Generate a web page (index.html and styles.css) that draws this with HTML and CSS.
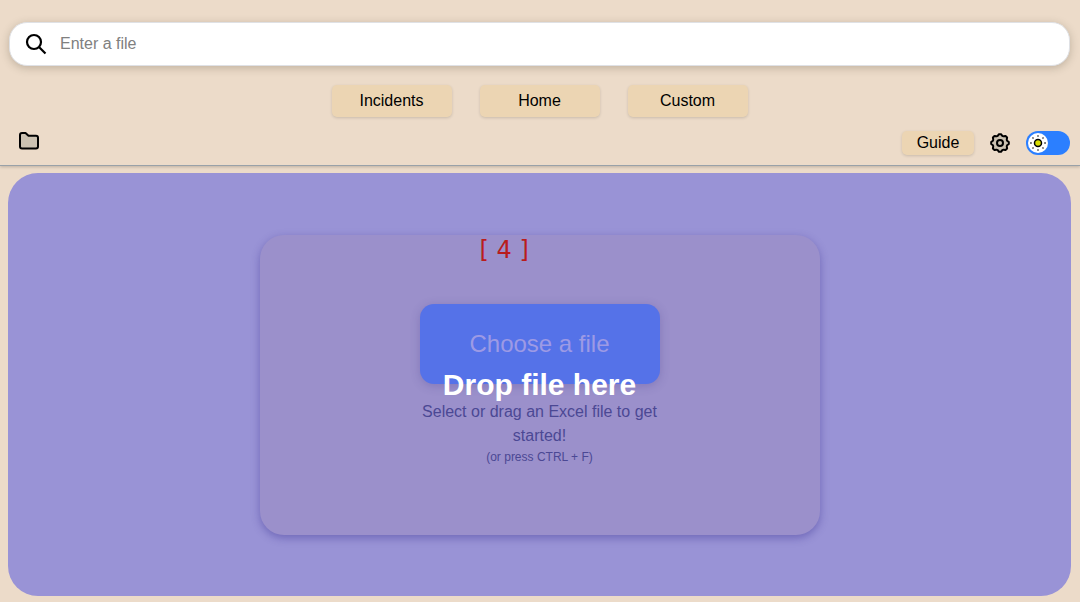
FILE: index.html
```html
<!DOCTYPE html>
<html lang="en">
<head>
<meta charset="utf-8">
<meta name="viewport" content="width=device-width, initial-scale=1">
<title>File viewer</title>
<link rel="stylesheet" href="styles.css">
</head>
<body>
<header class="header">
  <label class="search">
    <svg class="search-icon" viewBox="0 0 24 24" width="24" height="24" fill="none" stroke="#000" stroke-width="2.200" aria-hidden="true"><circle cx="10" cy="10" r="7"/><path d="M15 15 21.500 21.500"/></svg>
    <input class="search-input" type="text" placeholder="Enter a file" aria-label="Enter a file">
  </label>
  <nav class="tabs">
    <button class="btn tab" type="button">Incidents</button>
    <button class="btn tab" type="button">Home</button>
    <button class="btn tab" type="button">Custom</button>
  </nav>
  <div class="toolbar">
    <button class="icon-btn" type="button" aria-label="Open folder">
      <svg viewBox="0 0 22 20" width="22" height="20" fill="#cbc1b1" stroke="#000" stroke-width="2" stroke-linejoin="round" aria-hidden="true"><path d="M2 4Q2 2 4 2H7.500L10.500 4.800H18Q20 4.800 20 6.800V15.500Q20 17.500 18 17.500H4Q2 17.500 2 15.500Z"/></svg>
    </button>
    <div class="tools">
      <button class="btn guide" type="button">Guide</button>
      <button class="icon-btn" type="button" aria-label="Settings">
        <svg viewBox="0 0 20 20" width="20" height="20" stroke="#000" stroke-width="2" stroke-linejoin="round" aria-hidden="true"><path fill="#cbc1b1" d="M9 1.200H11L12.300 2.900Q12.900 3.300 13.600 3.200L15.500 2.900L17.100 4.500L16.800 6.400Q16.700 7.100 17.100 7.700L18.800 9V11L17.100 12.300Q16.700 12.900 16.800 13.600L17.100 15.500L15.500 17.100L13.600 16.800Q12.900 16.700 12.300 17.100L11 18.800H9L7.700 17.100Q7.100 16.700 6.400 16.800L4.500 17.100L2.900 15.500L3.200 13.600Q3.300 12.900 2.900 12.300L1.200 11V9L2.900 7.700Q3.300 7.100 3.200 6.400L2.900 4.500L4.500 2.900L6.400 3.200Q7.100 3.300 7.700 2.900Z"/><circle cx="10" cy="10" r="3" fill="#cbc1b1"/></svg>
      </button>
      <label class="switch">
        <input class="switch-input" type="checkbox" aria-label="Light theme" checked>
        <svg class="knob" viewBox="0 0 20 20" width="20" height="20" aria-hidden="true"><circle cx="10" cy="10" r="10" fill="#fff"/><circle cx="10" cy="10" r="3.500" fill="#d9dd00" stroke="#000" stroke-width="1.500"/><path d="M10 2.200v1.500M10 16.300v1.500M2.200 10h1.500M16.300 10h1.500M4.500 4.500l1 1M14.500 14.500l1 1M4.500 15.500l1-1M14.500 5.500l1-1" stroke="#222" stroke-width="1.300"/></svg>
      </label>
    </div>
  </div>
</header>
<main class="dropzone">
  <section class="card">
    <p class="count">[ 4 ]</p>
    <div class="picker">
      <button class="choose" type="button">Choose a file</button>
      <p class="hint">Select or drag an Excel file to get started!</p>
      <p class="shortcut">(or press CTRL + F)</p>
    </div>
  </section>
  <div class="drop-label">Drop file here</div>
</main>
</body>
</html>
```
FILE: styles.css
```css
* { box-sizing: border-box; }

body {
  margin: 0;
  min-height: 100vh;
  display: flex;
  flex-direction: column;
  background: #ecdbc9;
  color: #000;
  font-family: "Liberation Sans", Arial, sans-serif;
  font-size: 16px;
  line-height: 24px;
}

p { margin: 0; }

button, input { font: inherit; }

.header {
  padding: 22px 10px 10px 9px;
  border-bottom: 1px solid #99a1a8;
  box-shadow: 0 1px 3px rgba(0, 0, 0, 0.2);
}

.search {
  display: flex;
  align-items: center;
  gap: 12px;
  height: 44px;
  padding: 0 14px;
  background: #fff;
  border: 1px solid #dfe1e5;
  border-radius: 18px;
  box-shadow: 0 2px 8px rgba(60, 50, 30, 0.25);
}

.search-icon { flex: none; }

.search-input {
  flex: 1;
  min-width: 0;
  padding: 0;
  border: 0;
  outline: 0;
  background: none;
}

.search-input::placeholder { color: #808080; }

.btn {
  padding: 0;
  border: 0;
  border-radius: 5px;
  background: #ecd5b3;
  color: #000;
  box-shadow: 0 1px 3px rgba(0, 0, 0, 0.15);
}

.tabs {
  display: flex;
  justify-content: center;
  gap: 28px;
  margin-top: 19px;
}

.tab {
  width: 120px;
  height: 32px;
}

.toolbar {
  display: flex;
  justify-content: space-between;
  align-items: flex-start;
  margin-top: 14px;
  padding-left: 9px;
}

.tools {
  display: flex;
  align-items: center;
  gap: 16px;
}

.guide {
  width: 72px;
  height: 24px;
}

.icon-btn {
  display: flex;
  padding: 0;
  border: 0;
  background: none;
}

.switch {
  position: relative;
  display: flex;
  align-items: center;
  width: 44px;
  height: 24px;
  padding: 2px;
  border-radius: 12px;
  background: #2b7fff;
}

.switch-input {
  position: absolute;
  inset: 0;
  width: 100%;
  height: 100%;
  margin: 0;
  opacity: 0;
}

.dropzone {
  position: relative;
  flex: 1;
  display: flex;
  justify-content: center;
  align-items: center;
  margin: 7px 9px 6px 8px;
  padding: 16px;
  border-radius: 30px;
  background: #9993d6;
}

.card {
  display: flex;
  flex-direction: column;
  align-items: center;
  width: 100%;
  max-width: 560px;
  min-height: 300px;
  border-radius: 24px;
  background: #9b90cb;
  box-shadow: 0 3px 8px rgba(50, 40, 140, 0.4);
}

.count {
  width: 240px;
  padding-left: 60px;
  color: #b91c1c;
  font-family: "DejaVu Sans", sans-serif;
  font-size: 24px;
  line-height: 30px;
  white-space: nowrap;
}

.picker {
  display: flex;
  flex-direction: column;
  width: 240px;
  margin-top: 39px;
  color: #4b4894;
  text-align: center;
}

.choose {
  height: 80px;
  margin-bottom: 16px;
  border: 0;
  border-radius: 14px;
  background: #5572e8;
  color: #9d9ae5;
  font-size: 24px;
  box-shadow: 0 2px 10px rgba(60, 50, 130, 0.25);
}

.shortcut {
  font-size: 12px;
  line-height: 18px;
}

.drop-label {
  position: absolute;
  inset: 0;
  display: flex;
  justify-content: center;
  align-items: center;
  color: #fff;
  font-size: 30px;
  font-weight: 700;
  pointer-events: none;
}
```
